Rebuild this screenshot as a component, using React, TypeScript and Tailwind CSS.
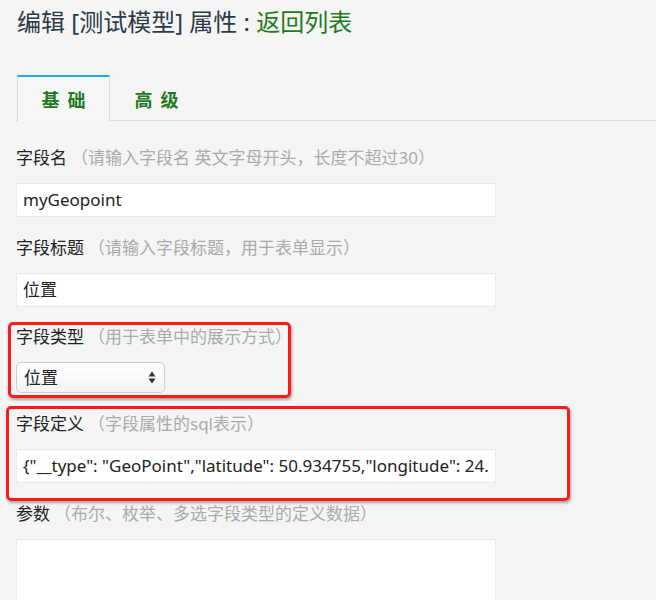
import React from "react";

const font = { fontFamily: '"Noto Sans", "Noto Sans CJK SC", sans-serif' };

function Label({ name, hint }: { name: string; hint: string }) {
  return (
    <div className="h-5 flex items-center text-[17px] leading-5 whitespace-nowrap">
      <span className="text-[#222]">{name}</span>
      <span className="ml-[4px] text-[#aaa]">（{hint}）</span>
    </div>
  );
}

function TextBox({ value }: { value: string }) {
  return (
    <div className="mt-[15px] w-[480px] h-[34px] bg-white border border-[#ebebeb] flex items-center pl-[6px] overflow-hidden whitespace-nowrap text-[17px] text-[#222]">
      {value}
    </div>
  );
}

export default function App() {
  return (
    <div className="relative w-[656px] h-[600px] overflow-hidden bg-[#f5f5f5]" style={font}>
      <div className="pl-4">
        <div className="pt-[6px] h-[38px] text-[24px] leading-8 text-[#2c3a48] whitespace-nowrap pl-px">
          编辑 [测试模型] 属性 : <span className="text-[#1e7a1e]">返回列表</span>
        </div>

        <div className="mt-[37px] h-[46px] flex border-b border-[#dcdcdc] -mr-4">
          <div className="ml-px w-[93px] h-[46px] -mb-px border-t-2 border-t-[#19aee6] border-x border-x-[#dcdcdc] bg-[#f7f7f7] flex items-center justify-center pt-[3px] text-[18px] font-semibold text-[#1e7a1e] tracking-[8px] pl-2">
            基础
          </div>
          <div className="w-[93px] h-[45px] flex items-center justify-center pt-[5px] text-[18px] font-semibold text-[#1e7a1e] tracking-[8px] pl-2">
            高级
          </div>
        </div>

        <div className="mt-[27px]">
          <Label name="字段名" hint="请输入字段名 英文字母开头，长度不超过30" />
          <TextBox value="myGeopoint" />
        </div>

        <div className="mt-[21px]">
          <Label name="字段标题" hint="请输入字段标题，用于表单显示" />
          <TextBox value="位置" />
        </div>

        <div className="mt-[20px]">
          <Label name="字段类型" hint="用于表单中的展示方式" />
          <div className="mt-[15px] w-[149px] h-[31px] rounded-[5px] border border-[#cfcfcf] bg-gradient-to-b from-white to-[#f4f4f4] flex items-center justify-between pl-[7px] pr-[8px] text-[17px] text-[#222]">
            <span>位置</span>
            <svg width="8" height="13" viewBox="0 0 8 13">
              <path d="M4 0.5 L7.5 5.5 L0.5 5.5 Z" fill="#333" />
              <path d="M4 12.5 L7.5 7.5 L0.5 7.5 Z" fill="#333" />
            </svg>
          </div>
        </div>

        <div className="mt-[21px]">
          <Label name="字段定义" hint="字段属性的sql表示" />
          <TextBox value={'{"__type": "GeoPoint","latitude": 50.934755,"longitude": 24.'} />
        </div>

        <div className="mt-[21px]">
          <Label name="参数" hint="布尔、枚举、多选字段类型的定义数据" />
          <div className="mt-[15px] w-[480px] h-[120px] bg-white border border-[#ebebeb]" />
        </div>
      </div>

      <div className="absolute left-[8px] top-[322px] w-[283px] h-[76px] border-[3px] border-[#ff1a1a] rounded-[5px] shadow-[1px_2px_3px_rgba(0,0,0,0.35)]" />
      <div className="absolute left-[6px] top-[406px] w-[564px] h-[95px] border-[3px] border-[#ff1a1a] rounded-[5px] shadow-[1px_2px_3px_rgba(0,0,0,0.35)]" />
    </div>
  );
}
